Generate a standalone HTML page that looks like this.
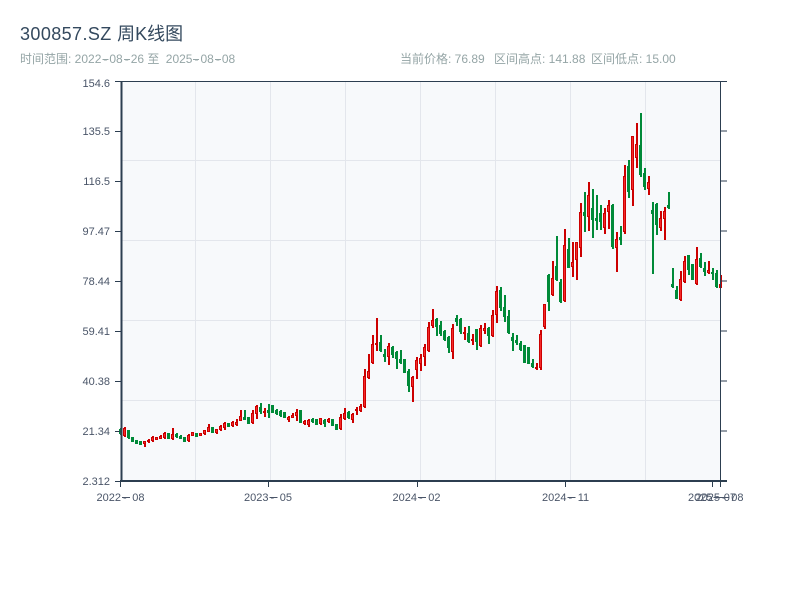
<!DOCTYPE html>
<html lang="zh">
<head>
<meta charset="utf-8">
<title>300857.SZ 周K线图</title>
<style>
html,body{margin:0;padding:0;background:#fff;width:800px;height:600px;overflow:hidden}
svg{display:block}
text{font-family:"Liberation Sans","Noto Sans CJK SC",sans-serif}
</style>
</head>
<body>
<svg id="c" xmlns="http://www.w3.org/2000/svg" width="800" height="600" viewBox="0 0 800 600">
<rect width="800" height="600" fill="#fff"/>
<text x="20" y="40" font-size="18" fill="#34495e"><tspan letter-spacing=".4">300857.SZ </tspan>周K线图</text>
<text x="20" y="63" font-size="12" fill="#95a5a6">时间范围: 2022<tspan dx="2">-</tspan><tspan dx="2">08</tspan><tspan dx="2">-</tspan><tspan dx="2">26</tspan> 至 <tspan dx="3">2025</tspan><tspan dx="2">-</tspan><tspan dx="2">08</tspan><tspan dx="2">-</tspan><tspan dx="2">08</tspan></text>
<path d="M102.5 59.5H108.5M124 59.5H130M193 59.5H199M215 59.5H221" stroke="#95a5a6" stroke-width="1" fill="none"/>
<text x="400" y="63" font-size="12" fill="#95a5a6">当前价格: 76.89</text>
<text x="494" y="63" font-size="12" fill="#95a5a6">区间高点: 141.88</text>
<text x="591" y="63" font-size="12" fill="#95a5a6">区间低点: 15.00</text>
<rect x="121" y="81" width="599" height="400" fill="#f7f9fb"/>
<g stroke="#e3e6ec" stroke-width="1" fill="none">
<path d="M195.5 81V481M270.5 81V481M345.5 81V481M420.5 81V481M495.5 81V481M570.5 81V481M645.5 81V481"/>
<path d="M121 160.5H720M121 240.5H720M121 320.5H720M121 400.5H720"/>
</g>
<g id="k"></g>
<g stroke="#2c3e50" fill="none">
<path stroke-width="2" d="M121.5 81V482M120 481H727"/>
<path stroke-width="1" d="M115 81.5H720.5M720.5 81V481M115 131.5H121M115 181.5H121M115 231.5H121M115 281.5H121M115 331.5H121M115 381.5H121M115 431.5H121M115 481.5H121"/>
<path stroke-width="1" d="M720 81.5H727M720 131H727M720 181H727M720 231H727M720 281H727M720 331H727M720 381H727M720 431H727"/>
<path stroke-width="1" d="M120.5 481V487M268.5 481V487M417.5 481V487M565.5 481V487M712.5 481V487M720.5 481V487"/>
</g>
<g font-size="11" fill="#4a5568" text-anchor="end">
<text x="110" y="87">154.6</text>
<text x="110" y="135">135.5</text>
<text x="110" y="185">116.5</text>
<text x="110" y="235">97.47</text>
<text x="110" y="285">78.44</text>
<text x="110" y="335">59.41</text>
<text x="110" y="385">40.38</text>
<text x="110" y="435">21.34</text>
<text x="110" y="485">2.312</text>
</g>
<g font-size="11" fill="#4a5568">
<text x="96.5" y="501">2022<tspan dx="2">-</tspan><tspan dx="5.6">08</tspan></text>
<text x="244" y="501">2023<tspan dx="2">-</tspan><tspan dx="5.6">05</tspan></text>
<text x="392.5" y="501">2024<tspan dx="2">-</tspan><tspan dx="5.6">02</tspan></text>
<text x="542" y="501">2024<tspan dx="2">-</tspan><tspan dx="5.6">11</tspan></text>
<text x="688" y="501">2025<tspan dx="2">-</tspan><tspan dx="5.6">07</tspan></text>
<text x="695.5" y="501">2025<tspan dx="2">-</tspan><tspan dx="5.6">08</tspan></text>
</g>
<path d="M122 497.5H130M269.5 497.5H277.5M418 497.5H426M567.5 497.5H575.5M713.5 497.5H721.5M721 497.5H729" stroke="#4a5568" stroke-width="1" fill="none"/>
</svg>
<script>
var G='g',R='r';
var groups=[
[380,[[145,165,147,163,G],[141,170,145,169,R],[150,177,150,175,G],[171,186,171,186,G],[181,192,181,192,G],[183,196,183,196,G],[183,200,184,192,R],[177,189,179,187,R],[169,185,170,183,R],[170,180,171,179,R],[166,178,167,176,R],[156,177,158,175,R],[159,177,159,177,G],[144,179,163,177,R],[159,174,161,172,G],[165,178,167,176,G],[171,186,171,186,G],[162,186,164,184,R],[156,168,157,167,R],[160,171,160,171,G],[160,168,160,168,R],[150,164,151,163,R],[132,156,140,155,R],[141,159,141,159,G],[147,162,148,159,R],[136,153,138,151,R],[126,150,128,144,R],[129,141,129,141,G],[123,141,127,138,R],[116,138,125,136,R],
[90,123,108,122,R],[90,120,111,119,G],[111,132,111,132,G],[90,132,98,130,R],[74,117,78,103,R],[69,102,81,95,G],[84,111,92,99,R],[72,114,90,98,G],[75,100,75,100,G],[87,104,90,101,G],[90,111,93,108,G],[96,114,96,114,G],[108,126,110,120,R],[99,114,105,113,R],[87,122,95,107,R],[90,128,90,128,G],[120,135,122,132,R],[117,140,119,136,R],[114,129,117,127,G],[117,135,117,135,G],[114,135,115,132,R],[117,141,119,132,G],[114,129,117,127,R],[117,138,117,138,G],[132,150,132,150,G],[102,150,111,146,R],[84,120,98,118,R],[93,117,97,115,G],[99,129,101,119,R],[81,105,88,94,R]]],
[300,[[312,336,318,333,R],[207,324,229,322,R],[162,238,212,234,R],[105,192,133,190,R],[54,153,129,135,R],[105,156,126,154,G],[147,186,162,170,G],[129,195,139,171,R],[138,174,141,165,G],[153,207,156,176,G],[150,192,177,189,G],[177,219,177,219,G],[207,276,212,258,G],[228,306,231,261,R],[171,237,180,210,R],[162,213,175,192,R],[132,198,141,171,R],[66,156,81,154,R],[27,84,60,78,R],[54,108,57,81,G],[63,108,75,102,G],[90,123,93,121,G],[108,159,110,144,G],[72,177,84,157,R],[45,78,54,66,G],[54,102,57,96,G],[81,120,96,102,R],[78,129,100,126,G],[102,135,117,123,R],[87,150,88,126,G],[75,141,84,139,R]]],
[270,[[159,192,174,182,R],[171,222,174,198,G],[120,201,135,199,R],[48,159,63,135,R],[51,123,60,114,G],[75,156,111,141,G],[120,192,138,189,G],[189,243,201,213,G],[195,225,210,219,G],[213,243,219,240,G],[225,279,225,279,G],[231,282,231,282,G],[267,294,279,291,G],[279,300,291,297,R],[180,300,192,294,R],[102,177,102,171,R]]],
[180,[[282,393,285,366,G],[243,348,294,345,R],[168,303,258,300,G],[297,369,306,366,G],[147,366,195,363,R],[174,264,207,264,G],[186,291,246,261,R],[186,300,186,240,R],[69,230,96,204,R],[36,156,96,108,G],[6,153,45,110,R],[27,174,84,120,G],[45,150,114,124,G],[75,150,99,126,G],[84,162,99,144,R],[60,147,75,96,R],[72,207,75,201,G],[156,276,178,204,R],[138,195,171,180,G]]],
[105,[[180,387,213,381,R],[165,279,183,261,G],[93,303,93,255,R],[54,189,117,159,R],[24,216,120,210,G],[189,255,204,246,G],[213,270,231,252,R],[291,507,315,327,G],[294,390,297,360,G],[318,378,339,369,R],[306,405,318,342,R],[261,312,300,309,G]]],
[230,[[114,174,162,172,G],[168,207,180,207,G],[123,213,147,211,R],[78,159,93,157,R],[75,135,75,120,G],[102,150,102,150,G],[51,165,87,163,R],[69,114,84,111,G],[96,138,114,126,G],[93,132,120,129,R],[114,150,126,133,G],[120,174,129,171,G],[135,174,162,174,R]]]
];
var s='',i=0;
groups.forEach(function(g){
  var b=g[0];
  g[1].forEach(function(d){
    var L=119+4*i, wt=Math.round(b+d[0]/3), wb=Math.round(b+d[1]/3), bt=Math.round(b+d[2]/3), bb=Math.round(b+d[3]/3), h=Math.max(bb-bt,1);
    if(d[4]===R){
      s+='<rect x="'+(L+1)+'" y="'+wt+'" width="2" height="'+(wb-wt)+'" fill="#cc0000"/>';
      s+='<rect x="'+L+'" y="'+bt+'" width="3" height="'+h+'" fill="#cc0000"/>';
      if(h>2)s+='<rect x="'+(L+1)+'" y="'+(bt+1)+'" width="1" height="'+(h-2)+'" fill="#f42a2a"/>';
    }else{
      s+='<rect x="'+(L+1)+'" y="'+wt+'" width="2" height="'+(wb-wt)+'" fill="#008a38"/>';
      s+='<rect x="'+L+'" y="'+bt+'" width="3" height="'+h+'" fill="#008a38"/>';
    }
    i++;
  });
});
document.getElementById('k').innerHTML=s;
</script>
</body>
</html>
